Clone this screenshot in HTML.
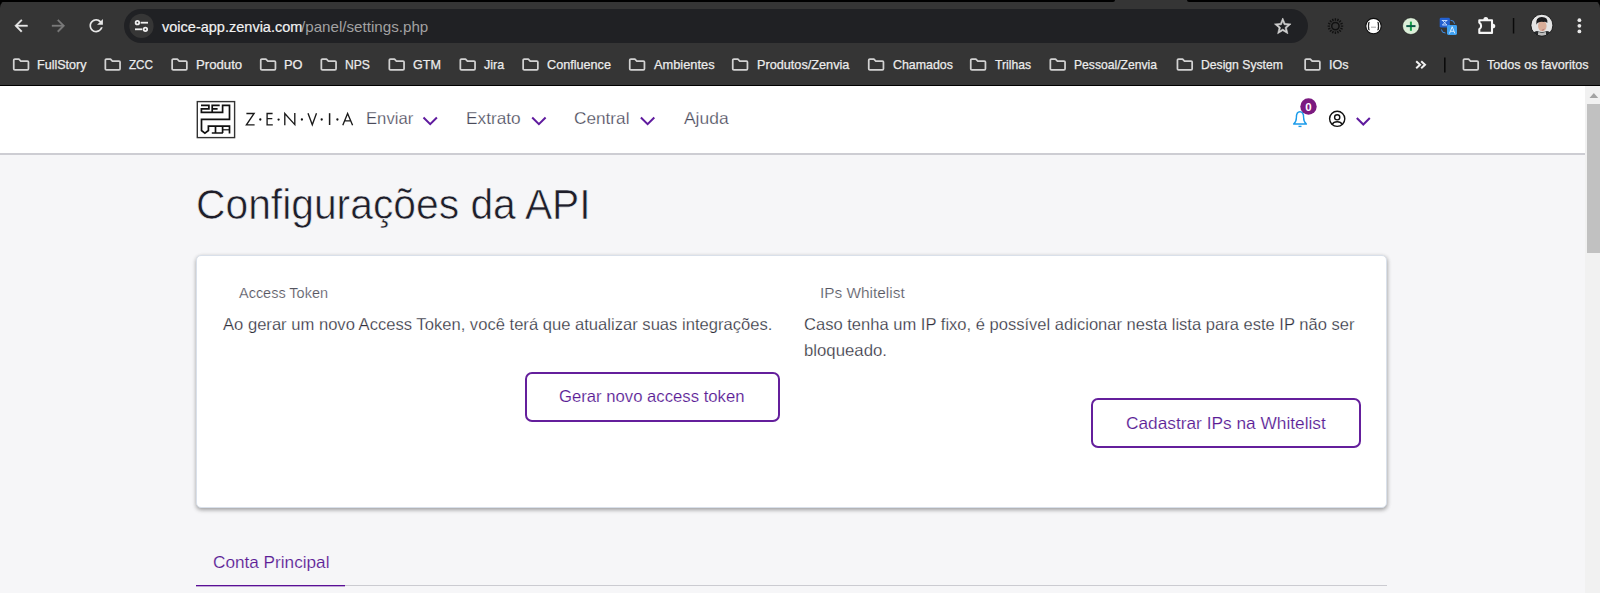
<!DOCTYPE html>
<html><head><meta charset="utf-8">
<style>
*{box-sizing:border-box}
html,body{margin:0;padding:0}
body{width:1600px;height:593px;overflow:hidden;position:relative;background:#f6f6f8;font-family:"Liberation Sans",sans-serif}
.abs{position:absolute}
.tx{position:absolute;white-space:pre;line-height:1;transform-origin:0 0;font-family:"Liberation Sans",sans-serif}
#chrome{position:absolute;left:0;top:0;width:1600px;height:86px;background:#000}
#toolbar{position:absolute;left:0;top:0;width:1600px;height:85px;background:#353535;border-radius:8px 8px 0 0}
#omni{position:absolute;left:124px;top:9px;width:1184px;height:34px;background:#202124;border-radius:17px}
#hdr{position:absolute;left:0;top:86px;width:1585px;height:67px;background:#fff}
#hdrline{position:absolute;left:0;top:153px;width:1585px;height:2px;background:#cdcdd3}
#card{position:absolute;left:196px;top:255px;width:1191px;height:253px;background:#fff;border:1px solid #d9e0ea;border-radius:5px;box-shadow:0 2px 4px rgba(0,0,0,.3),1px 1px 4px rgba(0,0,0,.1)}
.btn{position:absolute;border:2px solid #641f9c;border-radius:7px;background:#fff}
#sb{position:absolute;left:1585px;top:86px;width:15px;height:507px;background:#f1f1f1}
#thumb{position:absolute;left:1587px;top:104px;width:13px;height:149px;background:#c1c1c1}
</style></head><body>
<div id="chrome"><div id="toolbar"></div><div class="abs" style="left:0;top:0;width:1115px;height:2px;background:#000;border-bottom-right-radius:2px"></div><div class="abs" style="left:1187px;top:0;width:413px;height:2px;background:#000;border-bottom-left-radius:2px"></div></div>
<div id="omni"></div>
<!-- nav icons -->
<svg class="abs" style="left:0;top:0" width="1600" height="86" viewBox="0 0 1600 86">
  <!-- back -->
  <path transform="translate(11.5,16.2) scale(0.8)" d="M20 11H7.83l5.59-5.59L12 4l-8 8 8 8 1.41-1.41L7.83 13H20v-2z" fill="#e8e8e8" stroke="#e8e8e8" stroke-width="0.45"/>
  <path transform="translate(48.8,16.2) scale(0.8)" d="M12 4l-1.41 1.41L16.17 11H4v2h12.17l-5.58 5.59L12 20l8-8z" fill="#7a7a7a" stroke="#7a7a7a" stroke-width="0.45"/>
  <!-- reload -->
  <path transform="translate(86.1,15.6) scale(0.84)" d="M17.65 6.35C16.2 4.9 14.21 4 12 4c-4.42 0-7.99 3.58-7.99 8s3.57 8 7.99 8c3.73 0 6.84-2.55 7.73-6h-2.08c-.82 2.33-3.04 4-5.65 4-3.31 0-6-2.69-6-6s2.69-6 6-6c1.66 0 3.14.69 4.22 1.78L13 11h7V4l-2.35 2.35z" fill="#e8e8e8"/>
  <!-- site info -->
  <circle cx="141.5" cy="25.9" r="12.1" fill="#363636"/>
  <g fill="none" stroke="#f0f0f0" stroke-width="1.8">
    <circle cx="137.4" cy="22.7" r="1.75"/>
    <path d="M140.6,22.7 H148"/>
    <circle cx="145.4" cy="29.3" r="1.75"/>
    <path d="M135,29.3 H142.3"/>
  </g>
  <!-- star -->
  <path transform="translate(1272.8,16.3) scale(0.83)" d="M22 9.24l-7.19-.62L12 2 9.19 8.63 2 9.24l5.46 4.73L5.82 21 12 17.27 18.18 21l-1.63-7.03L22 9.24zM12 15.4l-3.76 2.27 1-4.28-3.32-2.88 4.38-.38L12 6.1l1.71 4.04 4.38.38-3.32 2.88 1 4.28L12 15.4z" fill="#d0d0d0" stroke="#d0d0d0" stroke-width="0.7" stroke-linejoin="round"/>
  <!-- sun/dark mode icon -->
  <path d="M1340.80,26.10 L1343.20,26.10 M1340.39,28.17 L1342.61,29.08 M1339.22,29.92 L1340.92,31.62 M1337.47,31.09 L1338.38,33.31 M1335.40,31.50 L1335.40,33.90 M1333.33,31.09 L1332.42,33.31 M1331.58,29.92 L1329.88,31.62 M1330.41,28.17 L1328.19,29.08 M1330.00,26.10 L1327.60,26.10 M1330.41,24.03 L1328.19,23.12 M1331.58,22.28 L1329.88,20.58 M1333.33,21.11 L1332.42,18.89 M1335.40,20.70 L1335.40,18.30 M1337.47,21.11 L1338.38,18.89 M1339.22,22.28 L1340.92,20.58 M1340.39,24.03 L1342.61,23.12" stroke="#111" stroke-width="1.4"/>
  <circle cx="1335.4" cy="26.1" r="3.7" fill="none" stroke="#111" stroke-width="1.5"/>
  <!-- json icon -->
  <circle cx="1373.5" cy="26.1" r="7.7" fill="#fff" stroke="#0d0d0d" stroke-width="1.1"/>
  <path d="M1369.6,22.3 Q1368.6,22.3 1368.6,23.6 V25.3 Q1368.6,26.1 1367.9,26.1 Q1368.6,26.1 1368.6,26.9 V28.6 Q1368.6,29.9 1369.6,29.9 M1377.4,22.3 Q1378.4,22.3 1378.4,23.6 V25.3 Q1378.4,26.1 1379.1,26.1 Q1378.4,26.1 1378.4,26.9 V28.6 Q1378.4,29.9 1377.4,29.9" fill="none" stroke="#222" stroke-width="1.35"/>
  <path d="M1371,27.2 H1376" stroke="#999" stroke-width="0.9"/>
  <!-- plus icon -->
  <circle cx="1410.9" cy="26.1" r="8.4" fill="#dcefd9" stroke="#1a1a1a" stroke-width="0.6"/>
  <path d="M1410.9,21.6 V30.8" stroke="#17a34a" stroke-width="2"/>
  <path d="M1406.3,26.1 H1415.5" stroke="#0c5a48" stroke-width="2"/>
  <!-- translate -->
  <rect x="1439.7" y="17.7" width="10.2" height="9.9" rx="1.4" fill="#2360d0"/>
  <rect x="1447" y="25" width="10" height="9.9" rx="1.4" fill="#3fa2f2"/>
  <path d="M1441.8,20.5 H1447.3 M1442.3,25 H1447 M1442.5,20.5 L1446.8,25 M1446.8,20.5 L1442.5,25" stroke="#cfe3ff" stroke-width="0.9"/>
  <path d="M1449.5,33.5 L1452.2,26.7 L1454.9,33.5 M1450.5,31.3 H1454" stroke="#e6f2ff" stroke-width="0.9" fill="none"/>
  <path d="M1450.5,20.3 Q1454.5,20.3 1454.5,23.8 M1441.5,29.5 Q1441.5,33 1445.5,33" stroke="#3d8ee6" stroke-width="1" fill="none"/>
  <!-- puzzle -->
  <path d="M1479.3,20.2 H1492 V32.9 H1479.3 V29.2 A3.9,3.9 0 0 0 1479.3,22.6 Z" fill="none" stroke="#f5f5f5" stroke-width="2.1" stroke-linejoin="round"/>
  <path d="M1483.3,20.2 A2.5,3.3 0 0 1 1488.3,20.2 Z M1492,23.4 A3.3,2.5 0 0 1 1492,28.4 Z" fill="#f5f5f5"/>
  <!-- separator -->
  <rect x="1512.8" y="18" width="1.5" height="15.5" fill="#0a0a0a"/>
  <!-- avatar -->
  <clipPath id="avc"><circle cx="1541.9" cy="25.2" r="10.9"/></clipPath>
  <g clip-path="url(#avc)">
    <rect x="1530" y="14" width="24" height="24" fill="#e4e4e4"/>
    <path d="M1531,38 Q1532,31.5 1537,31 Q1542,33 1547,31 Q1552,31.5 1553,38 Z" fill="#26292b"/>
    <path d="M1537.6,38 L1538.3,31.8 Q1542,33.5 1545.8,31.8 L1546.5,38 Z" fill="#bdbdbd"/>
    <ellipse cx="1542.3" cy="26" rx="4.3" ry="5.2" fill="#d9ad98"/>
    <path d="M1541.9,30.2 Q1543.6,30.2 1544.3,28.8" stroke="#b07070" stroke-width="0.9" fill="none"/>
    <path d="M1536.3,24.8 Q1535.3,17.2 1541.8,17 Q1548.3,17.2 1547.3,23 Q1545.8,21.6 1543.8,21.9 Q1540.5,21.2 1537.8,22.8 Q1537,23.5 1536.3,24.8 Z" fill="#1b1b1d"/>
  </g>
  <circle cx="1541.9" cy="25.2" r="11" fill="none" stroke="#161616" stroke-width="0.9"/>
  <!-- menu -->
  <circle cx="1579.4" cy="20.2" r="1.9" fill="#e8e8e8"/>
  <circle cx="1579.4" cy="25.8" r="1.9" fill="#e8e8e8"/>
  <circle cx="1579.4" cy="31.4" r="1.9" fill="#e8e8e8"/>
  <!-- bookmarks folders -->
  <defs>
    <path id="fold" d="M0.85,2 Q0.85,0.85 2,0.85 H6 L7.9,2.75 H14.5 Q15.55,2.75 15.55,3.8 V10.5 Q15.55,11.55 14.5,11.55 H2 Q0.85,11.55 0.85,10.5 Z" fill="none" stroke="#d2d2d2" stroke-width="1.75" stroke-linejoin="round"/>
  </defs>
  <use href="#fold" x="12.9" y="58.3"/>
  <use href="#fold" x="104.5" y="58.3"/>
  <use href="#fold" x="171.3" y="58.3"/>
  <use href="#fold" x="259.9" y="58.3"/>
  <use href="#fold" x="320.5" y="58.3"/>
  <use href="#fold" x="388.5" y="58.3"/>
  <use href="#fold" x="459.5" y="58.3"/>
  <use href="#fold" x="522.3" y="58.3"/>
  <use href="#fold" x="628.9" y="58.3"/>
  <use href="#fold" x="731.9" y="58.3"/>
  <use href="#fold" x="867.9" y="58.3"/>
  <use href="#fold" x="969.9" y="58.3"/>
  <use href="#fold" x="1049.5" y="58.3"/>
  <use href="#fold" x="1176.6" y="58.3"/>
  <use href="#fold" x="1304.3" y="58.3"/>
  <use href="#fold" x="1462.6" y="58.3"/>
  <!-- chevrons >> -->
  <path d="M1416.2,61.2 L1420,64.7 L1416.2,68.2 M1421.2,61.2 L1425,64.7 L1421.2,68.2" fill="none" stroke="#f2f2f2" stroke-width="2"/>
  <rect x="1444" y="57.5" width="1.6" height="15" fill="#0a0a0a"/>
</svg>

<div id="hdr"></div>
<div id="hdrline"></div>
<!-- logo -->
<svg class="abs" style="left:196px;top:100px" width="40" height="39" viewBox="0 0 40 39">
  <rect x="1.3" y="1.6" width="37.3" height="36" fill="#fff" stroke="#333" stroke-width="1.4"/>
  <g fill="none" stroke="#111" stroke-width="1.7" stroke-linejoin="miter">
    <path d="M5,5.4 H12.9 V8.9 H5.4 V12.3 H26.6 V5.4 H33.5 V19.4 H5.5 V30.5 L8.9,33.2 L12.4,30.5 V26.1 H33.5 V33.5"/>
    <path d="M23.7,5.4 H16.2 V12.3 M16.2,8.9 H21.6"/>
    <path d="M15.8,33 H26.9 M19.5,26.1 V33 M26.6,26.1 V33"/>
    <path d="M26.6,29.8 H33.5" stroke-width="1.2"/>
  </g>
</svg>
<svg class="abs" style="left:0;top:86px" width="400" height="67" viewBox="0 86 400 67">
  <g fill="none" stroke="#1a1a1a" stroke-width="1.35" stroke-linejoin="miter">
    <path d="M246.4,113.5 H254.1 L246.4,124.8 H254.6"/>
    <path d="M272.6,113.5 H267.1 V124.8 H272.8 M267.1,118.6 H272.3"/>
    <path d="M284.8,125.2 V113.6 L294.8,124.6 V113"/>
    <path d="M308,113.2 L312.3,124.8 L316.5,113.2"/>
    <path d="M329.6,113.2 V125" stroke-width="1.5"/>
    <path d="M342.8,125.2 L347.6,113.6 L352.6,125.2 M344.6,120.9 H350.8"/>
  </g>
  <g fill="#111">
    <circle cx="260.3" cy="119.5" r="1.15"/><circle cx="278.6" cy="119.6" r="1.15"/><circle cx="301.9" cy="119.5" r="1.15"/><circle cx="321.7" cy="119.5" r="1.15"/><circle cx="337.4" cy="119.5" r="1.15"/>
  </g>
</svg>
<!-- nav chevrons -->
<svg class="abs" style="left:0;top:86px" width="1600" height="67" viewBox="0 86 1600 67">
  <g fill="none" stroke="#5f1a9e" stroke-width="2">
    <path d="M423.5,117.5 L430.2,124.2 L436.9,117.5"/>
    <path d="M532.2,117.5 L538.9,124.2 L545.6,117.5"/>
    <path d="M640.9,117.5 L647.6,124.2 L654.3,117.5"/>
    <path d="M1356.8,118 L1363.3,124.5 L1369.8,118"/>
  </g>
  <!-- bell -->
  <g fill="none" stroke="#1a9bea" stroke-width="1.4" stroke-linejoin="round">
    <path d="M1293.6,124 Q1296.4,121.8 1296.4,117.5 Q1296.4,111.8 1300,111.8 Q1303.6,111.8 1303.6,117.5 Q1303.6,121.8 1306.4,124 Z"/>
    <path d="M1298.5,126.4 H1301.5"/>
  </g>
  <!-- badge -->
  <circle cx="1308.5" cy="106.5" r="8.2" fill="#7b1a80"/>
  <text x="1308.5" y="110.6" font-family="Liberation Sans" font-size="11.5" font-weight="bold" fill="#fff" text-anchor="middle">0</text>
  <!-- user -->
  <g fill="none" stroke="#111" stroke-width="1.4">
    <circle cx="1337.2" cy="118.8" r="7.6"/>
    <circle cx="1337.2" cy="117.3" r="2.6"/>
    <path d="M1332.2,124.5 Q1333.5,121.8 1337.2,121.8 Q1340.9,121.8 1342.2,124.5"/>
  </g>
</svg>

<div id="card"></div>
<div class="btn" style="left:525px;top:372px;width:255px;height:50px"></div>
<div class="btn" style="left:1091px;top:398px;width:270px;height:50px"></div>
<!-- tab line -->
<div class="abs" style="left:196px;top:585px;width:1191px;height:1px;background:#cbcbd1"></div>
<div class="abs" style="left:196px;top:585px;width:149px;height:1px;background:#5a0f96"></div><div class="abs" style="left:196px;top:586px;width:149px;height:1px;background:rgba(90,15,150,.35)"></div>
<div id="sb"></div>
<div id="thumb"></div>
<svg class="abs" style="left:1585px;top:86px" width="15" height="18"><path d="M4.5,12 L8.85,7 L13.2,12 Z" fill="#a3a3a3"/></svg>
<div class="tx" style="left:161.53px;top:19.30px;font-size:15px;color:#f2f2f2;font-weight:400;transform:scaleX(0.9678);-webkit-text-stroke:0.2px #f2f2f2;">voice-app.zenvia.com</div>
<div class="tx" style="left:300.59px;top:19.30px;font-size:15px;color:#a2a2a2;font-weight:400;transform:scaleX(1.0108);">/panel/settings.php</div>
<div class="tx" style="left:37.25px;top:57.80px;font-size:13px;color:#ececec;font-weight:400;transform:scaleX(0.9661);-webkit-text-stroke:0.25px #ececec;">FullStory</div>
<div class="tx" style="left:128.90px;top:57.80px;font-size:13px;color:#ececec;font-weight:400;transform:scaleX(0.8967);-webkit-text-stroke:0.25px #ececec;">ZCC</div>
<div class="tx" style="left:196.21px;top:57.80px;font-size:13px;color:#ececec;font-weight:400;transform:scaleX(1.0135);-webkit-text-stroke:0.25px #ececec;">Produto</div>
<div class="tx" style="left:284.23px;top:57.80px;font-size:13px;color:#ececec;font-weight:400;transform:scaleX(0.9874);-webkit-text-stroke:0.25px #ececec;">PO</div>
<div class="tx" style="left:345.27px;top:57.80px;font-size:13px;color:#ececec;font-weight:400;transform:scaleX(0.9336);-webkit-text-stroke:0.25px #ececec;">NPS</div>
<div class="tx" style="left:412.85px;top:57.80px;font-size:13px;color:#ececec;font-weight:400;transform:scaleX(0.9678);-webkit-text-stroke:0.25px #ececec;">GTM</div>
<div class="tx" style="left:484.25px;top:57.80px;font-size:13px;color:#ececec;font-weight:400;transform:scaleX(0.9621);-webkit-text-stroke:0.25px #ececec;">Jira</div>
<div class="tx" style="left:546.84px;top:57.80px;font-size:13px;color:#ececec;font-weight:400;transform:scaleX(0.9723);-webkit-text-stroke:0.25px #ececec;">Confluence</div>
<div class="tx" style="left:653.63px;top:57.80px;font-size:13px;color:#ececec;font-weight:400;transform:scaleX(0.9860);-webkit-text-stroke:0.25px #ececec;">Ambientes</div>
<div class="tx" style="left:756.84px;top:57.80px;font-size:13px;color:#ececec;font-weight:400;transform:scaleX(0.9756);-webkit-text-stroke:0.25px #ececec;">Produtos/Zenvia</div>
<div class="tx" style="left:892.86px;top:57.80px;font-size:13px;color:#ececec;font-weight:400;transform:scaleX(0.9536);-webkit-text-stroke:0.25px #ececec;">Chamados</div>
<div class="tx" style="left:995.27px;top:57.80px;font-size:13px;color:#ececec;font-weight:400;transform:scaleX(0.9333);-webkit-text-stroke:0.25px #ececec;">Trilhas</div>
<div class="tx" style="left:1074.27px;top:57.80px;font-size:13px;color:#ececec;font-weight:400;transform:scaleX(0.9333);-webkit-text-stroke:0.25px #ececec;">Pessoal/Zenvia</div>
<div class="tx" style="left:1200.97px;top:57.80px;font-size:13px;color:#ececec;font-weight:400;transform:scaleX(0.9364);-webkit-text-stroke:0.25px #ececec;">Design System</div>
<div class="tx" style="left:1329.25px;top:57.80px;font-size:13px;color:#ececec;font-weight:400;transform:scaleX(0.9667);-webkit-text-stroke:0.25px #ececec;">IOs</div>
<div class="tx" style="left:1487.24px;top:57.80px;font-size:13px;color:#ececec;font-weight:400;transform:scaleX(0.9693);-webkit-text-stroke:0.25px #ececec;">Todos os favoritos</div>
<div class="tx" style="left:365.60px;top:110.43px;font-size:16.5px;color:#4a4a5a;font-weight:400;transform:scaleX(1.0107);-webkit-text-stroke:0.25px #fff;">Enviar</div>
<div class="tx" style="left:466.26px;top:110.43px;font-size:16.5px;color:#4a4a5a;font-weight:400;transform:scaleX(1.0459);-webkit-text-stroke:0.25px #fff;">Extrato</div>
<div class="tx" style="left:574.27px;top:110.43px;font-size:16.5px;color:#4a4a5a;font-weight:400;transform:scaleX(1.0428);-webkit-text-stroke:0.25px #fff;">Central</div>
<div class="tx" style="left:683.75px;top:110.43px;font-size:16.5px;color:#4a4a5a;font-weight:400;transform:scaleX(1.0563);-webkit-text-stroke:0.25px #fff;">Ajuda</div>
<div class="tx" style="left:196.45px;top:183.85px;font-size:42px;color:#1e1e2a;font-weight:400;transform:scaleX(0.9714);-webkit-text-stroke:0.6px #f6f6f8;">Configurações da API</div>
<div class="tx" style="left:238.73px;top:286.35px;font-size:14px;color:#55555f;font-weight:400;transform:scaleX(1.0331);-webkit-text-stroke:0.2px #fff;">Access Token</div>
<div class="tx" style="left:222.60px;top:315.63px;font-size:16.5px;color:#30303c;font-weight:400;transform:scaleX(1.0056);-webkit-text-stroke:0.25px #fff;">Ao gerar um novo Access Token, você terá que atualizar suas integrações.</div>
<div class="tx" style="left:820.08px;top:285.95px;font-size:14px;color:#55555f;font-weight:400;transform:scaleX(1.0995);-webkit-text-stroke:0.2px #fff;">IPs Whitelist</div>
<div class="tx" style="left:804.01px;top:316.13px;font-size:16.5px;color:#30303c;font-weight:400;transform:scaleX(1.0031);-webkit-text-stroke:0.25px #fff;">Caso tenha um IP fixo, é possível adicionar nesta lista para este IP não ser</div>
<div class="tx" style="left:803.99px;top:342.43px;font-size:16.5px;color:#30303c;font-weight:400;transform:scaleX(1.0160);-webkit-text-stroke:0.25px #fff;">bloqueado.</div>
<div class="tx" style="left:559.30px;top:388.03px;font-size:16.5px;color:#5b1d96;font-weight:400;transform:scaleX(1.0111);-webkit-text-stroke:0.15px #fff;">Gerar novo access token</div>
<div class="tx" style="left:1126.46px;top:414.53px;font-size:16.5px;color:#5b1d96;font-weight:400;transform:scaleX(1.0474);-webkit-text-stroke:0.15px #fff;">Cadastrar IPs na Whitelist</div>
<div class="tx" style="left:213.17px;top:554.23px;font-size:16.5px;color:#5b1d96;font-weight:400;transform:scaleX(1.0410);-webkit-text-stroke:0.15px #f6f6f8;">Conta Principal</div>
</body></html>
